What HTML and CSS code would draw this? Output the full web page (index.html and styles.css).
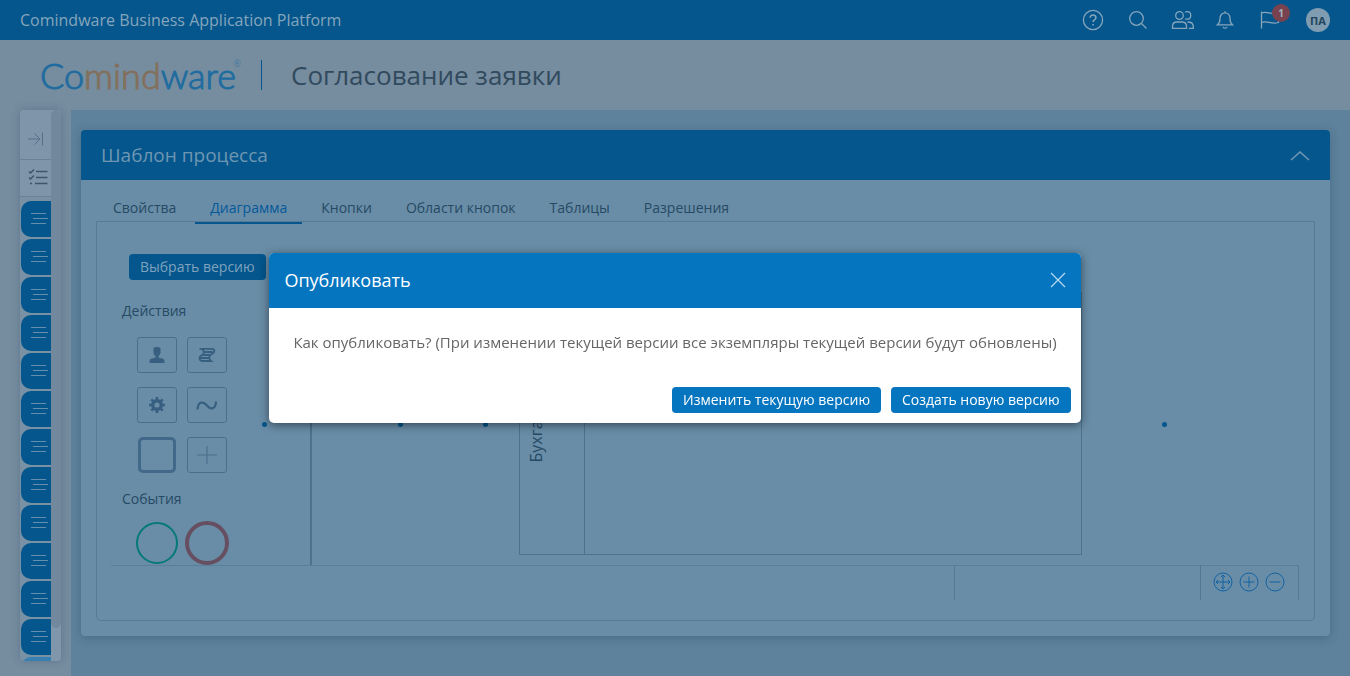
FILE: index.html
```
<!DOCTYPE html>
<html lang="ru">
<head>
<meta charset="utf-8">
<title>Согласование заявки</title>
<link rel="stylesheet" href="styles.css">
</head>
<body>
<svg class="defs" aria-hidden="true">
  <symbol id="lines" viewBox="0 0 18 12"><path d="M1 1h15M3 6h15M1 11h15"/></symbol>
</svg>
<div class="app">
  <header class="topbar">
    <span class="product">Comindware Business Application Platform</span>
    <nav class="tools">
      <button class="tool help" aria-label="Справка"><svg width="22" height="22" viewBox="0 0 22 22"><circle cx="11" cy="11" r="9.6"/><path d="M8.2 8.7c0-3.6 5.7-3.5 5.7 0 0 2-2.8 2.1-2.8 4.4M11.100 15v1.500" stroke-width="1.600"/></svg></button>
      <button class="tool search" aria-label="Поиск"><svg width="20" height="20" viewBox="0 0 20 20"><circle cx="8.500" cy="8.500" r="6.800"/><path d="M13.500 13.500l5 5"/></svg></button>
      <button class="tool people" aria-label="Пользователи"><svg width="24" height="20" viewBox="0 0 24 20"><circle cx="8.500" cy="5.500" r="3.800"/><path d="M1.500 18.300v-2c0-3 2-4.300 4.500-4.300h5c2.500 0 4.500 1.300 4.500 4.300v2zM14 2.200c1-.6 1.500-.6 2-.6 5 0 5 7.600 0 7.600-.6 0-1 0-1.800-.4M16.500 12c4 0 5.800 1.500 5.800 4.500v1.800h-4.500"/></svg></button>
      <button class="tool bell" aria-label="Уведомления"><svg width="18" height="20" viewBox="0 0 18 20"><path d="M9 1.200v1.600M1.500 14.800c1.800-1.500 2.500-2.800 2.500-6.300 0-7.600 10-7.600 10 0 0 3.500.7 4.800 2.500 6.300zM7 16.800c.5 1.800 3.500 1.800 4 0"/></svg></button>
      <button class="tool flag" aria-label="Задачи"><svg width="20" height="20" viewBox="0 0 20 20"><path d="M1.500 1.500v17M1.500 3c6-2.500 9 2.500 17 0v9.500c-8 2.500-11-2.500-17 0"/></svg><span class="count">1</span></button>
      <button class="avatar" aria-label="Профиль">ПА</button>
    </nav>
  </header>

  <div class="brandbar">
    <a class="logo" href="#">Co<span class="warm">mind</span>ware<sup>®</sup></a>
    <h1 class="page-title">Согласование заявки</h1>
  </div>

  <div class="workspace">
    <aside class="sidebar">
      <div class="rail">
        <button class="rail-top expand" aria-label="Развернуть"><svg width="18" height="14" viewBox="0 0 18 14"><path d="M1 7h12M7.500 1.500L13 7l-5.500 5.500M15.500.5v13"/></svg></button>
        <button class="rail-top checks" aria-label="Мои задачи"><svg width="20" height="16" viewBox="0 0 20 16"><path d="M1 2.500l1.500 1.500L6 .5M1 8.500L2.500 10 6 6.500M2 14.500h2M8 2.500h11.500M8 8.500h11.500M7 14.500h12.500"/></svg></button>
        <button class="rail-item" aria-label="Раздел 1"><svg><use href="#lines"/></svg></button>
        <button class="rail-item" aria-label="Раздел 2"><svg><use href="#lines"/></svg></button>
        <button class="rail-item" aria-label="Раздел 3"><svg><use href="#lines"/></svg></button>
        <button class="rail-item" aria-label="Раздел 4"><svg><use href="#lines"/></svg></button>
        <button class="rail-item" aria-label="Раздел 5"><svg><use href="#lines"/></svg></button>
        <button class="rail-item" aria-label="Раздел 6"><svg><use href="#lines"/></svg></button>
        <button class="rail-item" aria-label="Раздел 7"><svg><use href="#lines"/></svg></button>
        <button class="rail-item" aria-label="Раздел 8"><svg><use href="#lines"/></svg></button>
        <button class="rail-item" aria-label="Раздел 9"><svg><use href="#lines"/></svg></button>
        <button class="rail-item" aria-label="Раздел 10"><svg><use href="#lines"/></svg></button>
        <button class="rail-item" aria-label="Раздел 11"><svg><use href="#lines"/></svg></button>
        <button class="rail-item" aria-label="Раздел 12"><svg><use href="#lines"/></svg></button>
        <button class="rail-item current" aria-label="Раздел 13"></button>
      </div>
      <div class="track"><div class="thumb"></div></div>
    </aside>

    <main class="content">
      <section class="panel">
        <header class="panel-head">
          <h2>Шаблон процесса</h2>
          <button class="collapse" aria-label="Свернуть"><svg width="20" height="10" viewBox="0 0 20 10"><path d="M1 9l9-8 9 8"/></svg></button>
        </header>
        <div class="panel-body">
          <nav class="tabs">
            <a class="tab" href="#">Свойства</a>
            <a class="tab active" href="#">Диаграмма</a>
            <a class="tab" href="#">Кнопки</a>
            <a class="tab" href="#">Области кнопок</a>
            <a class="tab" href="#">Таблицы</a>
            <a class="tab" href="#">Разрешения</a>
          </nav>
          <div class="sheet">
            <div class="editor">
              <div class="palette">
                <button class="btn pick">Выбрать версию</button>
                <div class="stencils">
                  <h3>Действия</h3>
                  <div class="shapes">
                    <button class="shape" aria-label="Пользовательская задача"><svg width="16" height="18" viewBox="0 0 16 18"><path class="solid" d="M4.500 2.500C5 .5 11 .5 11.500 2.500v4.500C11 8.500 10.500 9.300 9.500 10v1.500l5 1.500c.8.500 1 1 1 4H.5c0-3 .2-3.500 1-4l5-1.500V10C5.500 9.300 5 8.500 4.500 7z"/></svg></button>
                    <button class="shape" aria-label="Сценарий"><svg width="18" height="16" viewBox="0 0 18 16"><path d="M1.500 1.800h12.500c3 0 3 3 .5 4.600L12.500 8c-1.800 1.500-1.500 4.500.5 6H3.500C.8 12.800 1 10 3 8.800L5 7.500C6.500 6 6 3 3.500 1.800M6.500 5h8M5 8h8M2.500 11h9" stroke-width="1.800"/></svg></button>
                    <button class="shape" aria-label="Служебная задача"><svg width="18" height="18" viewBox="0 0 18 18"><circle cx="9" cy="9" r="4.300" stroke-width="3.400"/><path d="M9 1v3M9 14v3M1 9h3M14 9h3M3.300 3.300l2 2M12.700 12.700l2 2M14.700 3.300l-2 2M5.300 12.700l-2 2" stroke-width="2.600"/></svg></button>
                    <button class="shape" aria-label="Подпроцесс по условию"><svg width="22" height="12" viewBox="0 0 22 12"><path d="M1.500 10.500c.5-9 6.500-8 9.500-4s8.500 5 9-4" stroke-width="2.200"/></svg></button>
                    <button class="shape bold" aria-label="Вызов процесса"></button>
                    <button class="shape plus" aria-label="Подпроцесс"><svg width="20" height="18" viewBox="0 0 20 18"><path d="M0 9h20M10 0v18" stroke-width="1.200"/></svg></button>
                  </div>
                  <h3>События</h3>
                  <div class="events">
                    <button class="event start" aria-label="Начальное событие"></button>
                    <button class="event end" aria-label="Конечное событие"></button>
                  </div>
                </div>
              </div>
              <div class="diagram">
                <div class="pool"><div class="lane-title"><span>Бухгалтер</span></div></div>
                <i class="dot d1"></i><i class="dot d2"></i><i class="dot d3"></i><i class="dot d4"></i>
              </div>
            </div>
            <footer class="statusbar">
              <div class="cell wide"></div>
              <div class="cell mid"></div>
              <div class="cell zoom">
                <button aria-label="По размеру"><svg width="20" height="20" viewBox="0 0 20 20"><circle cx="10" cy="10" r="9"/><path d="M10 3v14M3 10h14M8 5l2-2 2 2M8 15l2 2 2-2M5 8l-2 2 2 2M15 8l2 2-2 2"/></svg></button>
                <button aria-label="Увеличить"><svg width="20" height="20" viewBox="0 0 20 20"><circle cx="10" cy="10" r="9"/><path d="M10 4.500v11M4.500 10h11"/></svg></button>
                <button aria-label="Уменьшить"><svg width="20" height="20" viewBox="0 0 20 20"><circle cx="10" cy="10" r="9"/><path d="M4.500 10h11"/></svg></button>
              </div>
            </footer>
          </div>
        </div>
      </section>
    </main>
  </div>
</div>

<div class="overlay">
  <div class="dialog" role="dialog" aria-labelledby="dlg-title">
    <header class="dialog-head">
      <h2 id="dlg-title">Опубликовать</h2>
      <button class="close" aria-label="Закрыть"><svg width="16" height="16" viewBox="0 0 16 16"><path d="M1 1l14 14M15 1L1 15"/></svg></button>
    </header>
    <p class="dialog-text">Как опубликовать? (При изменении текущей версии все экземпляры текущей версии будут обновлены)</p>
    <div class="dialog-actions">
      <button class="btn primary">Изменить текущую версию</button>
      <button class="btn primary">Создать новую версию</button>
    </div>
  </div>
</div>
</body>
</html>
```

FILE: styles.css
```
* { box-sizing: border-box; }
body { margin: 0; font-family: "Open Sans", "Noto Sans", sans-serif; font-size: 14px; color: #264a64; }
button { font: inherit; color: inherit; background: none; border: 0; padding: 0; display: flex; align-items: center; justify-content: center; }
a { color: inherit; text-decoration: none; }
h1, h2, h3, p { margin: 0; font-weight: 400; }
svg { fill: none; stroke: currentColor; stroke-width: 1.3; display: block; }
.solid { fill: currentColor; stroke: none; }
.defs { position: absolute; width: 0; height: 0; }

.app { display: flex; flex-direction: column; height: 100vh; background: #768c9f; overflow: hidden; }

.topbar { flex: none; height: 40px; padding: 0 20px; display: flex; align-items: center; justify-content: space-between; background: #04568d; color: #86a5bb; }
.product { font-size: 16px; }
.tools { display: flex; align-items: center; }
.tool { position: relative; }
.help { margin-right: 24px; }
.search { margin-right: 23px; }
.people { margin-right: 21px; }
.bell { margin-right: 26px; }
.flag { margin-right: 26px; }
.count { position: absolute; left: 12px; top: -6px; width: 18px; height: 18px; border-radius: 9px; background: #78424f; color: #a5b1c0; font-size: 10px; font-weight: 700; line-height: 18px; text-align: center; }
.avatar { width: 24px; height: 24px; border-radius: 12px; background: #7f9cb1; color: #23455e; font-size: 11px; font-weight: 700; }

.brandbar { flex: none; height: 70px; padding: 0 40px; display: flex; align-items: center; }
.logo { position: relative; font-family: Lato, "Open Sans", sans-serif; font-size: 36px; line-height: 40px; font-weight: 300; color: #1f6c9f; padding-right: 25px; -webkit-text-stroke: 1px currentColor; }
.logo .warm { color: #83705c; }
.logo sup { position: absolute; right: 20px; top: 4px; font-size: 9px; line-height: 10px; -webkit-text-stroke: 0; }
.page-title { font-size: 26px; line-height: 30px; padding-left: 29px; border-left: 1px solid #04568d; color: #314a5d; }

.workspace { flex: 1; min-height: 0; display: flex; }
.sidebar { flex: none; width: 41px; margin: 0 10px 15px 20px; display: flex; border-radius: 4px; overflow: hidden; background: #7991a5; box-shadow: 0 0 8px rgba(30, 60, 90, .25); }
.rail { flex: 1; display: flex; flex-direction: column; gap: 2px; overflow: hidden; }
.rail-top { flex: none; color: #3d566c; }
.expand { height: 50px; padding-top: 8px; margin-bottom: -2px; border-bottom: 1px solid #6a8297; background: #7f96aa; color: #566f86; }
.checks { height: 37px; padding: 0 0 2px 4px; border-bottom: 1px solid #6a8297; background: #7f96aa; margin-bottom: 2px; }
.expand svg { stroke-width: 1; }
.checks svg { stroke-width: 1.5; }
.rail-item { flex: none; height: 36px; margin-left: 1px; padding: 0 0 2px 5px; border-radius: 10px 0 0 10px; background: #04568d; color: #648eac; }
.rail-item svg { width: 18px; height: 12px; stroke-width: 1; shape-rendering: crispEdges; }
.current { background: #387fb2; }
.track { width: 10px; background: #8097ab; }
.thumb { height: 94%; border-radius: 5px; background: #72899d; }

.content { flex: 1; min-width: 0; padding: 20px 20px 40px 10px; background: #5e829b; display: flex; }
.panel { flex: 1; min-width: 0; display: flex; flex-direction: column; border-radius: 4px; background: #698da7; box-shadow: 0 2px 10px rgba(20, 55, 85, .3); }
.panel-head { flex: none; height: 50px; padding: 0 20px; display: flex; align-items: center; justify-content: space-between; border-radius: 4px 4px 0 0; background: #04568d; color: #6f96b1; }
.panel-head h2 { font-size: 19px; }
.collapse { padding-top: 2px; }
.collapse svg { stroke-width: 1.6; }
.panel-body { flex: 1; min-height: 0; padding: 15px; display: flex; flex-direction: column; }
.tabs { flex: none; display: flex; gap: 4px; padding-left: 2px; margin-bottom: -3px; }
.tab { padding: 0 15px; line-height: 26px; height: 29px; border-bottom: 3px solid transparent; }
.active { color: #05599a; border-color: #04568d; }
.sheet { flex: 1; min-height: 0; padding: 0 15px 20px 14px; display: flex; flex-direction: column; border: 1px solid #567b96; border-radius: 0 0 5px 5px; }
.editor { position: relative; flex: 1; min-height: 0; display: flex; }
.palette { flex: none; width: 201px; padding-top: 32px; display: flex; flex-direction: column; align-items: flex-start; }
.stencils { flex: 1; align-self: stretch; padding: 21px 0 0 11px; border-right: 2px solid #4d728e; }
.stencils h3 { font-size: 14px; line-height: 20px; }
.btn { height: 26px; padding: 0 11px 2px; border-radius: 4px; }
.pick { margin-left: 18px; background: #04568d; color: #7fa3bd; white-space: nowrap; }
.shapes { display: grid; grid-template-columns: 40px 40px; gap: 14px 10px; margin: 16px 15px; }
.shape { height: 36px; border: 1px solid #4a6f8c; border-radius: 3px; color: #365f80; }
.bold { margin: 0 1px; border: 3px solid #42698a; border-radius: 5px; }
.plus { color: #4a6f8c; }
.events { display: flex; align-items: center; gap: 7px; margin: 12px 14px 0; }
.event { width: 42px; height: 42px; border-radius: 50%; border: 2px solid #057879; }
.end { width: 44px; height: 44px; border: 4px solid #664f61; }
.diagram { flex: 1; }
.pool { position: absolute; left: 408px; top: 70px; width: 563px; height: 263px; border: 1px solid #4d728e; }
.lane-title { width: 65px; height: 100%; border-right: 1px solid #4d728e; display: flex; align-items: center; padding-left: 5px; font-size: 16px; }
.lane-title span { writing-mode: vertical-rl; transform: rotate(180deg); }
.dot { position: absolute; top: 200px; width: 5px; height: 5px; border-radius: 50%; background: #04568d; }
.d1 { left: 151px; }
.d2 { left: 287px; }
.d3 { left: 372px; }
.d4 { left: 1051px; }
.statusbar { flex: none; height: 35px; display: flex; border-top: 1px solid #5a7f9a; }
.cell { border-right: 1px solid #52778f; }
.wide { flex: 1; border-color: #567b96; }
.mid { width: 246px; }
.zoom { width: 98px; padding: 0 1px 2px 0; display: flex; align-items: center; justify-content: center; gap: 6px; color: #1163a3; }
.zoom svg { stroke-width: 1; }

.overlay { position: fixed; inset: 0; display: grid; place-items: center; }
.dialog { border-radius: 5px; background: #fff; box-shadow: 0 2px 10px rgba(0, 0, 0, .5); overflow: hidden; }
.dialog-head { height: 55px; padding: 0 15px 1px; display: flex; align-items: center; justify-content: space-between; background: #0575bf; color: #fff; }
.dialog-head h2 { font-size: 18px; font-weight: 500; }
.close { color: #b4d8ef; }
.dialog-text { padding: 23px 24px 34px; font-size: 15px; line-height: 22px; color: #666; }
.dialog-actions { display: flex; justify-content: flex-end; gap: 10px; padding: 0 10px 10px; }
.primary { background: #0575bf; color: #fff; font-weight: 500; }
```
